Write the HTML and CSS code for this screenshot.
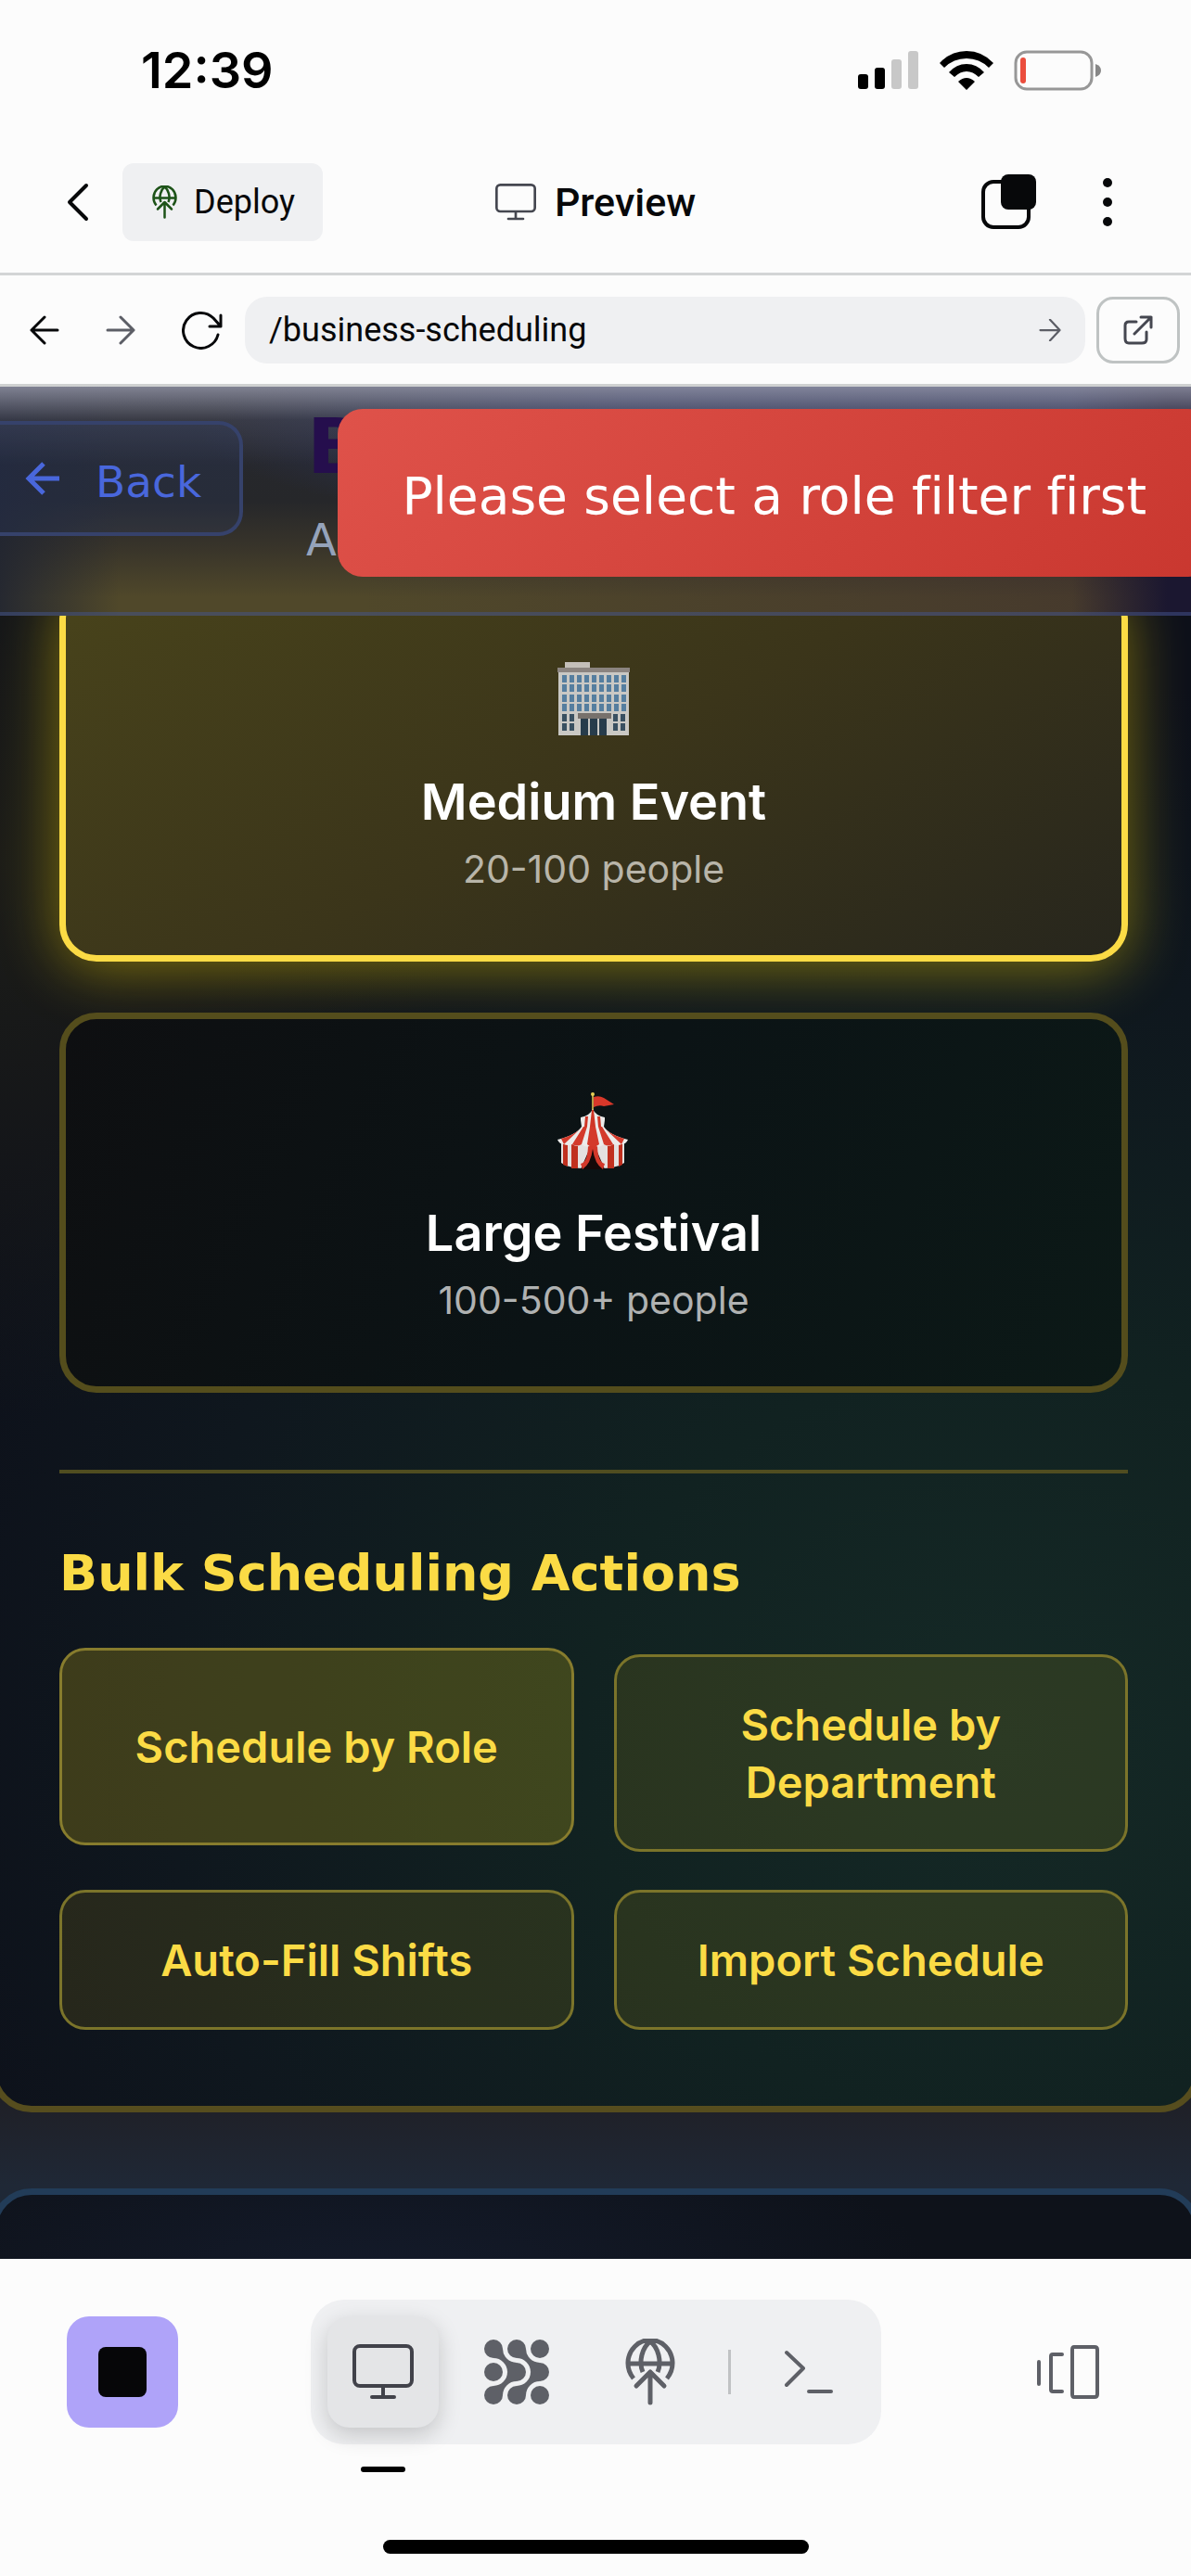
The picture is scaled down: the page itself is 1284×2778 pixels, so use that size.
FILE: index.html
```html
<!DOCTYPE html>
<html lang="en">
<head>
<meta charset="utf-8">
<meta name="viewport" content="width=device-width, initial-scale=1">
<title>Preview</title>
<link rel="stylesheet" href="styles.css">
</head>
<body>
<svg class="defs" width="0" height="0" aria-hidden="true">
  <symbol id="globe-up" viewBox="0 0 54 72">
    <g fill="none" stroke="currentColor" stroke-width="5" stroke-linecap="butt">
      <path d="M9 43A24 25 0 1 1 45 43M3 27H51M27 3C19 9 14 24 19 36M27 3C35 9 40 24 35 36"/>
      <path d="M27 69V36M12 51L27 36L42 51" stroke-linecap="round" stroke-linejoin="round"/>
    </g>
  </symbol>
  <symbol id="monitor" viewBox="0 0 66 60">
    <g fill="none" stroke="currentColor" stroke-width="4" stroke-linecap="round">
      <rect x="2" y="2" width="62" height="43" rx="6"/>
      <path d="M33 46V57M21 57H45"/>
    </g>
  </symbol>
</svg>
<div class="screen">
  <header class="status">
    <time class="clock">12:39</time>
    <div class="indicators">
      <svg width="66" height="42" viewBox="0 0 66 42"><g fill="#000"><rect y="25" width="11" height="16" rx="3"/><rect x="18" y="18" width="11" height="23" rx="3"/></g><g fill="#c8c8c8"><rect x="36" y="9" width="11" height="32" rx="3"/><rect x="54" width="11" height="41" rx="3"/></g></svg>
      <svg width="58" height="42" viewBox="0 0 58 42"><path d="M0 13Q12 0 29 0T58 13L53 18Q43 8 29 8T5 18ZM10 23Q18 14 29 14T48 23L42 28Q36 22 29 22T16 28ZM20 33Q29 25 38 33L29 42Z"/></svg>
      <svg width="95" height="44" viewBox="0 0 95 44"><rect x="2" y="2" width="82" height="40" rx="12" fill="none" stroke="#979797" stroke-width="3"/><rect x="7" y="8" width="6" height="28" rx="3" fill="#eb4d3d"/><path d="M88 15Q94 17 94 22T88 29Z" fill="#878787"/></svg>
    </div>
  </header>

  <nav class="appbar">
    <div class="appbar-side">
      <button class="plain" aria-label="Go back"><svg width="24" height="42" viewBox="0 0 24 42"><path d="M21 3L3 21L21 39" fill="none" stroke="currentColor" stroke-width="4" stroke-linecap="round" stroke-linejoin="round"/></svg></button>
      <button class="deploy"><svg class="deploy-icon" width="27" height="36"><use href="#globe-up"/></svg>Deploy</button>
    </div>
    <h1 class="appbar-title"><svg class="title-icon" width="44" height="40"><use href="#monitor"/></svg>Preview</h1>
    <div class="appbar-side appbar-end">
      <button class="plain" aria-label="Tabs"><svg width="60" height="60" viewBox="0 0 60 60"><rect x="2" y="8" width="49" height="49" rx="11" fill="none" stroke="currentColor" stroke-width="4"/><rect x="21" width="38" height="38" rx="8" fill="currentColor"/></svg></button>
      <button class="plain" aria-label="More"><svg width="12" height="54" viewBox="0 0 12 54" fill="currentColor"><circle cx="6" cy="6" r="5"/><circle cx="6" cy="27" r="5"/><circle cx="6" cy="48" r="5"/></svg></button>
    </div>
  </nav>

  <form class="urlbar">
    <div class="url-nav">
      <button type="button" class="plain" aria-label="Previous page"><svg width="32" height="32" viewBox="0 0 32 32"><path d="M30 16H2M16 2L2 16L16 30" class="line"/></svg></button>
      <button type="button" class="plain muted" aria-label="Next page"><svg width="32" height="32" viewBox="0 0 32 32"><path d="M2 16H30M16 2L30 16L16 30" class="line"/></svg></button>
      <button type="button" class="plain" aria-label="Reload"><svg width="44" height="42" viewBox="0 0 44 42"><path d="M39 26A19 19 0 1 1 34 8L42 17M42 5V17H30" class="line"/></svg></button>
    </div>
    <div class="address">
      <input class="address-input" type="text" value="/business-scheduling" aria-label="Path">
      <button type="button" class="plain muted" aria-label="Go"><svg width="24" height="24" viewBox="0 0 32 32"><path d="M2 16H30M16 1L30 16L16 31" class="line"/></svg></button>
    </div>
    <button type="button" class="external" aria-label="Open in new tab"><svg width="32" height="32" viewBox="0 0 32 32"><path d="M14 7H6Q2 7 2 11V25Q2 30 6 30H20Q25 30 25 26V18M12 20L30 2M19 2H30V13" class="line"/></svg></button>
  </form>

  <main class="webview">
    <section class="panel">
      <article class="size-card selected">
        <svg width="80" height="84" viewBox="0 0 80 84">
          <rect x="9" y="2" width="27" height="7" fill="#c4bfb9"/><rect x="2" y="9" width="76" height="72" fill="#c9c8c4"/><rect x="1" y="8" width="78" height="5" fill="#8b8480"/>
          <g stroke="#557e9f" stroke-width="8" stroke-dasharray="5 3"><path d="M6 20H75M6 30H75M6 41H75M6 51H75"/></g>
          <g fill="#395061"><path d="M6 58h5v8h-5zM14 58h5v8h-5zM61 58h5v8h-5zM69 58h5v8h-5zM6 68h5v8h-5zM14 68h5v8h-5zM61 68h5v8h-5zM69 68h5v8h-5z"/></g>
          <rect x="23" y="57" width="36" height="6" fill="#77716c"/><path d="M26 63h8v18h-8zM36 63h8v18h-8zM46 63h8v18h-8z" fill="#273c4b"/>
        </svg>
        <h2 class="card-title">Medium Event</h2>
        <p class="card-sub">20-100 people</p>
      </article>
      <article class="size-card">
        <svg width="80" height="84" viewBox="0 0 80 84">
          <path d="M39 2V22" stroke="#b59b45" stroke-width="2"/><circle cx="39" cy="3" r="2" fill="#e7cf54"/>
          <path d="M40 6Q46 4 51 7L62 14L51 16Q46 14 40 17Z" fill="#d8382a"/>
          <path d="M5 56H73V77Q64 84 39 83Q14 84 5 77Z" fill="#e4e1e0"/>
          <path d="M7 56H12V81L7 79ZM16 57H23V83H16ZM55 57H62V83H55ZM67 56H71V79L67 81Z" fill="#c0301f"/>
          <path d="M39 54L52 84H26Z" fill="#160909"/><path d="M39 56V62Q37 78 28 84L26 78Q34 76 34 57ZM39 56V62Q41 78 50 84L52 78Q44 76 44 57Z" fill="#d3382a"/>
          <path d="M27 38H51Q57 47 77 52Q75 57 70 57Q66 59 61 57Q56 61 51 57Q45 62 39 57Q33 62 27 57Q22 61 17 57Q12 59 8 57Q3 57 1 52Q21 47 27 38Z" fill="#ecebea"/>
          <path d="M29 38H33L27 57Q22 60 17 57ZM36 38H42L46 57Q39 63 33 57ZM45 38H49L61 57Q56 60 51 57ZM52 40Q59 47 73 51L70 57ZM26 40Q19 47 5 51L8 57Z" fill="#d43a2b"/>
          <path d="M39 19Q42 26 52 28V31L51 38H27L26 31V28Q36 26 39 19Z" fill="#ecebea"/>
          <path d="M38 20H40L42 38H36ZM31 27H34L33 38H30ZM44 27H47L48 38H45Z" fill="#cf3526"/>
        </svg>
        <h2 class="card-title">Large Festival</h2>
        <p class="card-sub">100-500+ people</p>
      </article>
      <section class="bulk">
        <h2 class="bulk-title">Bulk Scheduling Actions</h2>
        <div class="bulk-grid">
          <button class="bulk-btn hovered">Schedule by Role</button>
          <button class="bulk-btn">Schedule by Department</button>
          <button class="bulk-btn">Auto-Fill Shifts</button>
          <button class="bulk-btn">Import Schedule</button>
        </div>
      </section>
    </section>
    <section class="panel next-panel"></section>

    <header class="page-header">
      <a class="back" href="#"><svg width="38" height="36" viewBox="0 0 38 36"><path d="M37 18H4M20 2L4 18L20 34" fill="none" stroke="currentColor" stroke-width="5"/></svg><span class="back-label">Back</span></a>
      <div class="page-heading">
        <h1 class="page-title">B</h1>
        <p class="page-sub">A</p>
      </div>
    </header>
    <div class="toast" role="alert">Please select a role filter first</div>
  </main>

  <footer class="dock">
    <div class="dock-row">
      <button class="stop" aria-label="Stop"><span class="stop-mark"></span></button>
      <div class="tools">
        <button class="tool active" aria-label="Preview"><svg width="66" height="60"><use href="#monitor"/></svg></button>
        <button class="tool" aria-label="Agent"><svg width="72" height="72" viewBox="0 0 72 72" fill="currentColor">
          <g id="chain"><circle cx="11" cy="11" r="10"/><circle cx="36" cy="36" r="10"/><circle cx="11" cy="61" r="10"/><path d="M21 11A15 15 0 0 0 36 26L26 36A15 15 0 0 0 11 21ZM36 46A15 15 0 0 0 21 61L11 51A15 15 0 0 0 26 36Z"/></g>
          <use href="#chain" x="25"/><circle cx="61" cy="11" r="10"/><circle cx="11" cy="36" r="10"/><circle cx="61" cy="61" r="10"/></svg></button>
        <button class="tool" aria-label="Deployments"><svg width="54" height="72"><use href="#globe-up"/></svg></button>
        <span class="tool-divider"></span>
        <button class="tool" aria-label="Shell"><svg width="54" height="48" viewBox="0 0 54 48"><path d="M3 3L21 20L3 38M27 45H51" fill="none" stroke="currentColor" stroke-width="4" stroke-linecap="round" stroke-linejoin="round"/></svg></button>
      </div>
      <button class="panes" aria-label="All panes"><svg width="68" height="60" viewBox="0 0 68 60"><path d="M2 19V43M27 11H17Q15 11 15 13V49Q15 51 17 51H27M40 3H62Q65 3 65 6V54Q65 57 62 57H40Q38 57 38 54V6Q38 3 40 3Z" fill="none" stroke="currentColor" stroke-width="4" stroke-linecap="round"/></svg></button>
    </div>
    <div class="active-mark"></div>
    <div class="home-bar"></div>
  </footer>
</div>
</body>
</html>
```

FILE: styles.css
```css
* { box-sizing: border-box; }
body { margin: 0; background: #fcfcfc; color: #07080a; font-family: Roboto, sans-serif; }
h1, h2, p { margin: 0; }
button { font: inherit; color: inherit; border: 0; padding: 0; background: none; }
svg { display: block; flex: none; }
.defs { position: absolute; }
.line { fill: none; stroke: currentColor; stroke-width: 3; stroke-linecap: round; stroke-linejoin: round; }
.screen { display: flex; flex-direction: column; height: 100vh; overflow: hidden; }
.status, .appbar, .urlbar, .dock { flex: none; }

/* Phone status bar */
.status { display: flex; justify-content: space-between; align-items: center; height: 152px; padding: 0 96px 0 152px; }
.clock { font: 600 54px/60px Inter, sans-serif; color: #000; }
.indicators { display: flex; align-items: center; gap: 22px; }

/* App bar */
.appbar { display: grid; grid-template-columns: 1fr auto 1fr; align-items: center; height: 145px; padding: 0 72px 10px; border-bottom: 3px solid #d3d5d6; }
.appbar-side { display: flex; align-items: center; gap: 36px; }
.appbar-end { justify-content: flex-end; gap: 70px; padding-right: 12px; }
.deploy { display: flex; align-items: center; gap: 18px; height: 84px; padding: 0 30px 0 32px; border-radius: 12px; background: #eff0f2; font-size: 36px; line-height: 42px; }
.deploy-icon { color: #1d5318; }
.appbar-title { display: flex; align-items: center; gap: 20px; font-size: 43px; line-height: 48px; font-weight: 500; }
.title-icon { color: #454750; }

/* Address bar */
.urlbar { display: flex; align-items: center; gap: 12px; height: 120px; padding: 0 12px 0 32px; border-bottom: 3px solid #cfd1d1; }
.url-nav { display: flex; align-items: center; gap: 50px; padding-right: 12px; }
.muted { color: #5c5e66; }
.address { display: flex; flex: 1; align-items: center; height: 72px; padding: 0 26px; border-radius: 24px; background: #eff0f2; }
.address-input { flex: 1; min-width: 0; padding: 0; border: 0; background: none; color: inherit; font: 36px/42px Roboto, sans-serif; }
.external { display: grid; place-items: center; width: 90px; height: 72px; border: 3px solid #bfc3c3; border-radius: 18px; color: #454750; }

/* Previewed page */
.webview { position: relative; flex: 1; min-height: 0; overflow: hidden; padding-top: 203px; background: linear-gradient(180deg, #1f2027 1850px, #1f2836 1940px); color: #fff; }
.panel { margin: -250px -10px 0; padding: 250px 71px 82px 67px; border: 7px solid #564d1e; border-radius: 44px;
  background:
    radial-gradient(ellipse 500px 600px at 0 550px, rgba(30, 30, 24, .9), transparent),
    radial-gradient(ellipse 1250px 1150px at 84% 1500px, #152926 0, #112221 36%, #0f171e 72%, #0d101a 100%); }
.size-card { display: flex; flex-direction: column; align-items: center; height: 410px; padding: 78px 32px 0; border: 7px solid #544d1c; border-radius: 40px; background: linear-gradient(115deg, #0e0f11, #0b1315 50%, #0c1917); font-family: Inter, sans-serif; }
.size-card + .size-card { margin-top: 55px; }
.size-card.selected { border-color: #fbdb45; background: linear-gradient(150deg, #48431b, #3b351a 50%, #27261d); box-shadow: 0 8px 64px rgba(251, 219, 0, .46); }
.card-title { margin-top: 37px; font-size: 54px; line-height: 64px; font-weight: 600; }
.card-sub { margin-top: 16px; font-size: 41px; line-height: 48px; color: #b0b2b2; }
.selected .card-sub { color: #b8b5a9; }
.bulk { margin-top: 83px; padding-top: 76px; border-top: 4px solid #504d20; }
.bulk-title { color: #fbdb45; font: 700 54px/64px "DejaVu Sans", sans-serif; }
.bulk-grid { display: grid; grid-template-columns: 1fr 1fr; gap: 41px 43px; margin-top: 55px; }
.bulk-btn { min-height: 151px; padding: 41px 72px; border: 3px solid #7b742a; border-radius: 28px; background: rgba(251, 219, 20, .1); color: #fbdb45; font: 600 47px/62px Inter, sans-serif; }
.bulk-btn:nth-child(-n+2) { min-height: 213px; }
.bulk-btn.hovered { border-color: #877c2d; background: rgba(251, 219, 20, .2); transform: translateY(-7px); }
.next-panel { margin-top: 82px; height: 250px; padding: 0; border-color: #223c58; background: radial-gradient(ellipse 600px 200px at 32% 100px, #141b2b, #0e121a); }

/* Page header over the scrolled content */
.page-header { position: absolute; top: 0; left: 0; right: 0; display: flex; align-items: flex-start; gap: 68px; height: 247px; padding-top: 25px; border-bottom: 4px solid rgba(66, 84, 140, .5);
  background:
    linear-gradient(180deg, rgba(150, 152, 170, .8), rgba(90, 92, 110, .35) 36px, transparent 84px),
    linear-gradient(90deg, rgba(33, 37, 49, .9), transparent 10%, transparent 90%, #1b1730 98%),
    radial-gradient(ellipse 760px 120px at 76% 50px, rgba(46, 54, 100, .8) 50%, transparent),
    linear-gradient(90deg, transparent 30%, rgba(58, 40, 48, .5)),
    linear-gradient(180deg, #272930, #26272a 50%, #38342a 70%, #50482a 92%);
  background-origin: border-box; }
.back { display: flex; align-items: center; gap: 38px; width: 262px; height: 124px; margin-top: 12px; padding-left: 27px; border: 4px solid #36426b; border-left: 0; border-radius: 0 26px 26px 0; background: rgba(46, 64, 120, .2); color: #4967dc; font: 47px/56px "DejaVu Sans", sans-serif; text-decoration: none; }
.back-label { padding-top: 8px; }
.page-heading { font-family: "DejaVu Sans", sans-serif; }
.page-title { padding-left: 1px; font-size: 82px; line-height: 80px; color: #250e4d; }
.page-sub { margin-top: 32px; font-size: 48px; line-height: 56px; color: #95a3ba; }
.toast { position: absolute; top: 24px; right: -24px; padding: 62px 72px 54px 69px; border-radius: 27px; background: linear-gradient(135deg, #df524a, #c9372f); color: #fff; font: 55px/65px "DejaVu Sans", sans-serif; font-variant-ligatures: none; white-space: nowrap; }

/* Bottom dock */
.dock { padding: 44px 72px 24px; }
.dock-row { display: flex; align-items: center; justify-content: space-between; }
.stop { display: grid; place-items: center; width: 120px; height: 120px; border-radius: 24px; background: #afa3f9; }
.stop-mark { width: 52px; height: 54px; border-radius: 8px; background: #060608; }
.tools { display: flex; align-items: center; gap: 24px; height: 156px; padding: 18px; border-radius: 36px; background: #eff0f2; color: #5e6067; }
.tool { display: grid; place-items: center; width: 120px; height: 120px; border-radius: 24px; }
.tool.active { background: #e4e5e7; color: #41424a; box-shadow: 0 8px 24px rgba(0, 0, 0, .18); }
.tool-divider { width: 3px; height: 48px; background: #c0c2c4; }
.panes { display: grid; place-items: center; width: 120px; height: 120px; color: #5e6067; }
.active-mark { width: 48px; height: 6px; margin: 24px 0 0 317px; border-radius: 3px; background: #000; }
.home-bar { width: 459px; height: 15px; margin: 73px auto 0; border-radius: 8px; background: #000; }
```
